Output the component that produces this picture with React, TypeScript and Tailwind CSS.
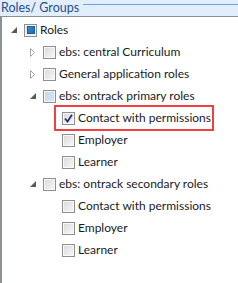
import React from "react";

type Check = "none" | "checked" | "partial" | "light";

type Node = {
  label: string;
  level: number;
  expander?: "open" | "closed";
  check: Check;
  highlight?: boolean;
};

const ROWS: Node[] = [
  { label: "Roles", level: 0, expander: "open", check: "partial" },
  { label: "ebs: central Curriculum", level: 1, expander: "closed", check: "none" },
  { label: "General application roles", level: 1, expander: "closed", check: "none" },
  { label: "ebs: ontrack primary roles", level: 1, expander: "open", check: "light" },
  { label: "Contact with permissions", level: 2, check: "checked", highlight: true },
  { label: "Employer", level: 2, check: "none" },
  { label: "Learner", level: 2, check: "none" },
  { label: "ebs: ontrack secondary roles", level: 1, expander: "open", check: "none" },
  { label: "Contact with permissions", level: 2, check: "none" },
  { label: "Employer", level: 2, check: "none" },
  { label: "Learner", level: 2, check: "none" },
];

function Expander({ kind }: { kind?: "open" | "closed" }) {
  return (
    <span className="flex h-[16px] w-[16px] shrink-0 items-center justify-center">
      {kind === "open" && (
        <svg width="6" height="6" viewBox="0 0 6 6">
          <path d="M0 6 L6 6 L6 0 Z" fill="#595959" />
        </svg>
      )}
      {kind === "closed" && (
        <svg width="6" height="9" viewBox="0 0 6 9">
          <path d="M0.5 0.5 L0.5 8.5 L4.5 4.5 Z" fill="#fff" stroke="#a6a6a6" />
        </svg>
      )}
    </span>
  );
}

function CheckBox({ state }: { state: Check }) {
  return (
    <span className="flex h-[13px] w-[13px] shrink-0 items-center justify-center border border-[#8e8f8f] bg-[#f4f4f4]">
      <span className="flex h-[11px] w-[11px] items-center justify-center border border-[#f8f8f8] bg-gradient-to-br from-[#dcdcdc] to-[#f6f6f6]">
        {state === "partial" && (
          <span className="h-[8px] w-[8px] border border-[#1d5f9f] bg-gradient-to-br from-[#2f8fd8] to-[#1a6bb6]" />
        )}
        {state === "light" && (
          <span className="h-[9px] w-[9px] bg-gradient-to-br from-[#bcd9f0] to-[#d6e8f7]" />
        )}
        {state === "checked" && (
          <svg width="9" height="9" viewBox="0 0 9 9">
            <path d="M1 4.5 L3.5 7.5 L8 0.8" fill="none" stroke="#1f2a7a" strokeWidth="1.7" />
          </svg>
        )}
      </span>
    </span>
  );
}

export default function App() {
  return (
    <div className="h-[283px] w-[238px] bg-white font-['Lato',sans-serif] text-[12px] text-[#1b1b1b]">
      <div className="flex h-[16px] items-start bg-[#e3eefc]">
        <span className="pl-[1px] text-[12.5px] leading-[15px] text-[#1f4f8f]">Roles/ Groups</span>
        <span className="ml-[4px] mt-[4px] h-px flex-1 bg-[#6fa3e0]" />
      </div>
      <div className="h-[267px] border-l-2 border-t border-[#8c9099] pt-[2px]">
        {ROWS.map((r, i) => (
          <div key={i} className="flex h-[22px] items-center" style={{ paddingLeft: 4 + r.level * 19 }}>
            <Expander kind={r.expander} />
            {r.highlight ? (
              <span className="-ml-[4px] flex h-[22px] items-center pl-[6px] pr-[1px] outline-2 outline-[#f0413f]">
                <CheckBox state={r.check} />
                <span className="ml-[3px] whitespace-nowrap">{r.label}</span>
              </span>
            ) : (
              <span className="ml-[2px] flex items-center">
                <CheckBox state={r.check} />
                <span className="ml-[3px] whitespace-nowrap">{r.label}</span>
              </span>
            )}
          </div>
        ))}
      </div>
    </div>
  );
}
